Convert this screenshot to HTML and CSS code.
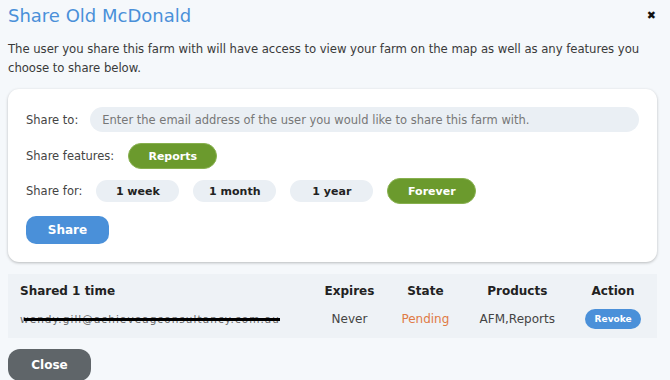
FILE: index.html
```html
<!DOCTYPE html>
<html>
<head>
<meta charset="utf-8">
<link rel="stylesheet" href="styles.css">
</head>
<body>
<div class="modal">
  <div class="header">
    <h1 class="title">Share Old McDonald</h1>
    <span class="close-x">&#10006;</span>
  </div>
  <p class="desc">The user you share this farm with will have access to view your farm on the map as well as any features you choose to share below.</p>
  <div class="card">
    <div class="row row-to">
      <span class="label">Share to:</span>
      <div class="input">Enter the email address of the user you would like to share this farm with.</div>
    </div>
    <div class="row row-feat">
      <span class="label">Share features:</span>
      <span class="pill pill-green pill-feat">Reports</span>
    </div>
    <div class="row row-for">
      <span class="label">Share for:</span>
      <span class="pill">1 week</span>
      <span class="pill">1 month</span>
      <span class="pill">1 year</span>
      <span class="pill pill-green">Forever</span>
    </div>
    <div class="row row-btn">
      <span class="btn btn-blue">Share</span>
    </div>
  </div>
  <div class="table">
    <div class="trow thead">
      <span class="c-user">Shared 1 time</span>
      <span class="c-exp">Expires</span>
      <span class="c-state">State</span>
      <span class="c-prod">Products</span>
      <span class="c-act">Action</span>
    </div>
    <div class="trow tbody">
      <span class="c-user"><span class="email">wendy.gill@achieveagconsultancy.com.au</span></span>
      <span class="c-exp">Never</span>
      <span class="c-state pending">Pending</span>
      <span class="c-prod">AFM,Reports</span>
      <span class="c-act"><span class="revoke">Revoke</span></span>
    </div>
  </div>
  <div class="footer">
    <span class="btn btn-gray">Close</span>
  </div>
</div>
</body>
</html>
```
FILE: styles.css
```css
* { box-sizing: border-box; }
html, body { margin: 0; padding: 0; }
body {
  background: #f5f8fb;
  font-family: "DejaVu Sans", sans-serif;
  color: #333;
  width: 670px;
  height: 380px;
  overflow: hidden;
}
.modal { padding: 0 13px 0 8px; }
.header {
  display: flex;
  justify-content: space-between;
  align-items: center;
  height: 30px;
}
.title {
  margin: 0;
  font-size: 18px;
  font-weight: normal;
  color: #4a90d9;
}
.close-x { font-size: 11px; color: #111; margin-right: 1px; }
.desc {
  margin: 10px 0 0 0;
  font-size: 11.7px;
  letter-spacing: -0.05px;
  line-height: 19px;
  color: #3a3a3a;
  margin-right: -6px;
}
.card {
  margin-top: 11px;
  background: #fff;
  border-radius: 11px;
  box-shadow: 0 1px 3px rgba(0,0,0,0.25);
  padding: 18px 18px 18px 18px;
  display: flex;
  flex-direction: column;
}
.row { display: flex; align-items: center; gap: 14px; }
.row-to { gap: 12px; }
.row-feat { margin-top: 11px; }
.row-for { margin-top: 9px; }
.row-btn { margin-top: 12px; }
.label { font-size: 11.5px; color: #444; }
.input {
  flex: 1;
  height: 25px;
  border-radius: 13px;
  background: #eaeff4;
  font-size: 11.5px;
  color: #777;
  display: flex;
  align-items: center;
  padding-left: 12px;
}
.pill {
  display: inline-flex;
  justify-content: center;
  align-items: center;
  width: 83px;
  height: 22px;
  border-radius: 11px;
  background: #eaeff4;
  font-size: 11px;
  font-weight: bold;
  color: #222;
}
.pill-green {
  width: 89px;
  height: 26px;
  border-radius: 13px;
  background: #6b9a2d;
  color: #fff;
  border: 1px solid #87b04e;
}
.btn {
  display: inline-flex;
  justify-content: center;
  align-items: center;
  width: 83px;
  height: 28px;
  border-radius: 10px;
  font-size: 12px;
  font-weight: bold;
  color: #fff;
}
.btn-blue { background: #4a90d9; }
.table {
  margin-top: 12px;
  background: #eef2f6;
  padding: 0 0 5px 0;
}
.trow { display: flex; align-items: center; }
.thead { height: 31px; font-size: 12px; font-weight: bold; color: #222; padding-top: 2px; }
.tbody { height: 28px; font-size: 12px; color: #444; }
.c-user { width: 306px; padding-left: 12px; }
.c-exp { width: 72px; text-align: center; }
.c-state { width: 80px; text-align: center; }
.c-prod { width: 104px; text-align: center; }
.c-act { width: 88px; text-align: center; }
.pending { color: #e07a45; }
.email {
  position: relative;
  font-size: 10.5px;
  letter-spacing: 1.05px;
  color: #666;
}
.email::after {
  content: "";
  position: absolute;
  left: 4px; right: 0;
  top: 50%;
  height: 3px;
  margin-top: -1px;
  background: #000;
}
.revoke {
  display: inline-flex;
  justify-content: center;
  align-items: center;
  width: 56px;
  height: 20px;
  border-radius: 10px;
  background: #4a90d9;
  color: #fff;
  font-size: 9px;
  font-weight: bold;
}
.footer { margin-top: 11px; }
.btn-gray { background: #5f6569; height: 32px; border-radius: 12px; }
```
